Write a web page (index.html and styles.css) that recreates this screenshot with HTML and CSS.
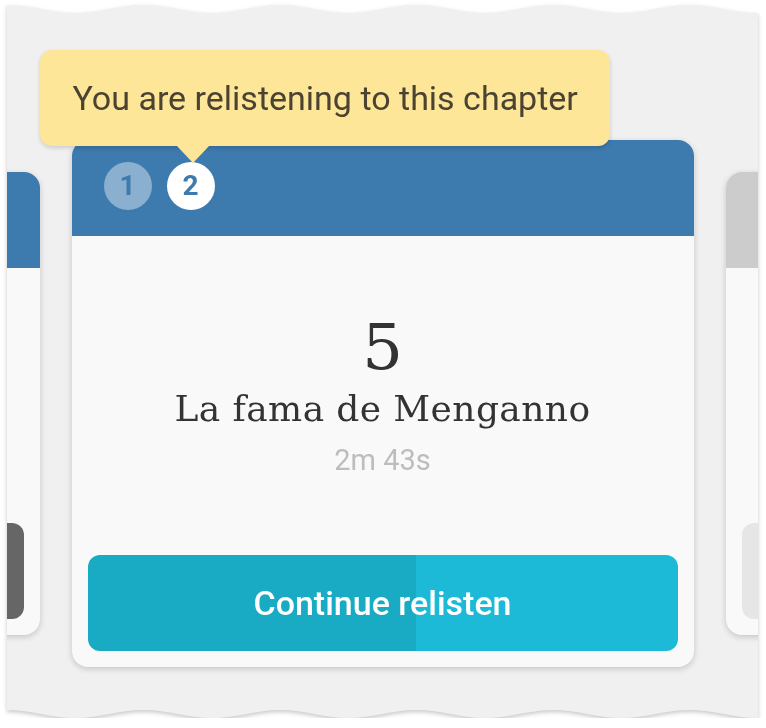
FILE: index.html
```html
<!DOCTYPE html>
<html lang="en">
<head>
    <meta charset="UTF-8">
    <title>Relisten</title>
    <link rel="stylesheet" href="styles.css">
</head>
<body>
    <div class="sheet">
        <div class="paper">
            <div class="carousel">
                <div class="card card-side card-done">
                    <div class="card-head"></div>
                    <div class="card-body">
                        <div class="card-info"></div>
                        <div class="btn btn-dark"></div>
                    </div>
                </div>

                <div class="card card-main">
                    <div class="tooltip">You are relistening to this chapter</div>
                    <div class="card-head">
                        <span class="round round-past">1</span>
                        <span class="round round-now">2</span>
                    </div>
                    <div class="card-body">
                        <div class="card-info">
                            <div class="chapter-no">5</div>
                            <div class="chapter-title">La fama de Menganno</div>
                            <div class="chapter-time">2m 43s</div>
                        </div>
                        <button class="btn btn-play" style="--progress: 55.6%">Continue relisten</button>
                    </div>
                </div>

                <div class="card card-side card-next">
                    <div class="card-head"></div>
                    <div class="card-body">
                        <div class="card-info"></div>
                        <div class="btn btn-light"></div>
                    </div>
                </div>
            </div>
        </div>
    </div>
</body>
</html>
```

FILE: styles.css
```css
body {
    margin: 0;
    background-color: #fff;
    font-family: Roboto, "Liberation Sans", sans-serif;
}
.sheet {
    width: 751px;
    height: 713px;
    margin: 5px 0 0 7px;
    filter: drop-shadow(0 2px 2px rgba(0, 0, 0, 0.22));
}
.paper {
    height: 100%;
    overflow: hidden;
    background-color: #f0f0f0;
    clip-path: path('M0,0 C24.86,0 43.41,8 68.27,8 C93.13,8 111.68,0 136.55,0 C161.41,0 179.96,8 204.82,8 C229.68,8 248.23,0 273.09,0 C297.95,0 316.5,8 341.36,8 C366.22,8 384.77,0 409.64,0 C434.5,0 453.05,8 477.91,8 C502.77,8 521.32,0 546.18,0 C571.04,0 589.59,8 614.45,8 C639.31,8 657.86,0 682.73,0 C707.59,0 726.14,8 751,8 L751,713 C726.14,713 707.59,705 682.73,705 C657.86,705 639.31,713 614.45,713 C589.59,713 571.04,705 546.18,705 C521.32,705 502.77,713 477.91,713 C453.05,713 434.5,705 409.64,705 C384.77,705 366.22,713 341.36,713 C316.5,713 297.95,705 273.09,705 C248.23,705 229.68,713 204.82,713 C179.96,713 161.41,705 136.55,705 C111.68,705 93.13,713 68.27,713 C43.41,713 24.86,705 0,705 Z');
}
.carousel {
    display: flex;
    justify-content: center;
    align-items: center;
    gap: 32px;
    height: 527px;
    padding-top: 135px;
}
.card {
    flex: 0 0 622px;
    display: flex;
    flex-direction: column;
    background-color: #f9f9f9;
    border-radius: 16px;
    box-shadow: 0 2px 6px rgba(0, 0, 0, 0.18);
}
.card-main {
    position: relative;
    height: 527px;
}
.card-side {
    height: 463px;
}
.card-head {
    display: flex;
    gap: 15px;
    height: 96px;
    box-sizing: border-box;
    padding: 22px 32px;
    border-radius: 16px 16px 0 0;
    background-color: #3d7aad;
}
.card-next .card-head {
    background-color: #cccccc;
}
.card-body {
    flex: 1;
    display: flex;
    flex-direction: column;
    padding: 0 16px 16px;
}
.card-info {
    flex: 1;
    display: flex;
    flex-direction: column;
    align-items: center;
    justify-content: center;
    color: #333;
}
.round {
    width: 48px;
    height: 48px;
    border-radius: 50%;
    text-align: center;
    font-size: 28px;
    font-weight: 700;
    line-height: 48px;
    color: #3d7aad;
}
.round-past {
    background-color: #8aafcf;
}
.round-now {
    background-color: #fff;
}
.chapter-no {
    font-family: "DejaVu Serif", serif;
    font-size: 64px;
    line-height: 64px;
}
.chapter-title {
    margin-top: 8px;
    font-family: "DejaVu Serif", serif;
    font-size: 36px;
    letter-spacing: 0.4px;
    line-height: 44px;
}
.chapter-time {
    margin-top: 12px;
    font-size: 29px;
    line-height: 34px;
    color: #bdbdbd;
}
.btn {
    height: 96px;
    border: 0;
    border-radius: 12px;
    font-family: Roboto, sans-serif;
}
.btn-play {
    width: 100%;
    background: linear-gradient(to right, #19abc4 var(--progress), #1cbad6 var(--progress));
    color: #fff;
    font-size: 34px;
    font-weight: 500;
}
.btn-dark {
    background-color: #666;
}
.btn-light {
    background-color: #e6e6e6;
}
.tooltip {
    position: absolute;
    left: -32px;
    top: -90px;
    z-index: 2;
    display: flex;
    align-items: center;
    width: 570px;
    height: 96px;
    box-sizing: border-box;
    padding-left: 33px;
    border-radius: 12px;
    background-color: #fde698;
    box-shadow: 0 2px 4px rgba(0, 0, 0, 0.15);
    font-size: 34px;
    white-space: nowrap;
    color: #4b4331;
}
.tooltip::after {
    content: "";
    position: absolute;
    left: 137px;
    top: 100%;
    border-left: 16px solid transparent;
    border-right: 16px solid transparent;
    border-top: 17px solid #fde698;
}
```
